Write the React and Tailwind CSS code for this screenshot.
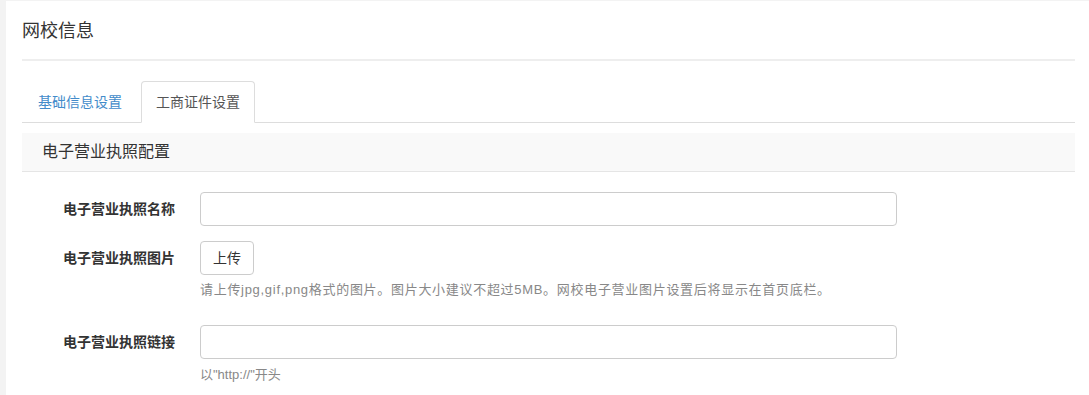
export default function App() {
  const font = { fontFamily: '"Liberation Sans","Noto Sans CJK SC",sans-serif' };
  return (
    <div className="bg-[#f3f3f3] pl-[6px] pt-px h-[395px] overflow-hidden" style={font}>
      <div className="bg-white h-[394px] pl-[16px] pr-[14px]">
        <div className="pt-[19px] pb-[17px] border-b-2 border-[#eeeeee]">
          <h1 className="text-[18px] leading-[22px] text-[#333333] font-normal">网校信息</h1>
        </div>
        <ul className="mt-[20px] flex border-b border-[#dddddd]">
          <li className="mr-[3px] -mb-px">
            <span className="block px-[15px] py-[10px] leading-[20px] text-[14px] text-[#428bca] border border-transparent rounded-t-[4px]">基础信息设置</span>
          </li>
          <li className="-mb-px">
            <span className="block px-[14px] py-[10px] leading-[20px] text-[14px] text-[#555555] bg-white border border-[#dddddd] border-b-transparent rounded-t-[4px]">工商证件设置</span>
          </li>
        </ul>
        <div className="mt-[10px] h-[39px] bg-[#f9f9f9] border-b border-[#e5e5e5] pl-[20px] flex items-center">
          <span className="text-[16px] text-[#333333]">电子营业执照配置</span>
        </div>
        <div className="pt-[20px]">
          <div className="flex items-center">
            <label className="w-[153px] text-right text-[14px] font-bold text-[#333333]">电子营业执照名称</label>
            <input className="ml-[25px] w-[697px] h-[34px] border border-[#cccccc] rounded-[4px] px-3 outline-none" />
          </div>
          <div className="flex mt-[15px]">
            <label className="w-[153px] text-right text-[14px] font-bold text-[#333333] leading-[34px]">电子营业执照图片</label>
            <div className="ml-[25px]">
              <button className="w-[54px] h-[34px] border border-[#cccccc] rounded-[4px] bg-white text-[14px] text-[#333333]">上传</button>
              <p className="mt-[5px] text-[13px] leading-[20px] tracking-[0.7px] text-[#888888]">请上传jpg,gif,png格式的图片。图片大小建议不超过5MB。网校电子营业图片设置后将显示在首页底栏。</p>
            </div>
          </div>
          <div className="flex mt-[25px]">
            <label className="w-[153px] text-right text-[14px] font-bold text-[#333333] leading-[34px]">电子营业执照链接</label>
            <div className="ml-[25px]">
              <input className="w-[697px] h-[34px] border border-[#cccccc] rounded-[4px] px-3 outline-none" />
              <p className="mt-[6px] text-[13px] leading-[20px] text-[#888888]">以"http://"开头</p>
            </div>
          </div>
        </div>
      </div>
    </div>
  );
}
